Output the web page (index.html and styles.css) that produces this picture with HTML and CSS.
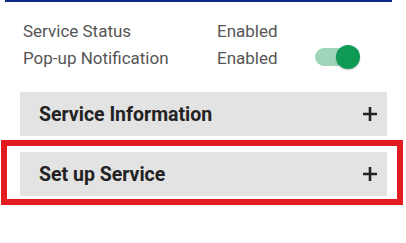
FILE: index.html
```html
<!DOCTYPE html>
<html>
<head>
<meta charset="utf-8">
<link rel="stylesheet" href="styles.css">
</head>
<body>
<div class="topline"></div>
<div class="status">
  <div class="row">
    <span class="label">Service Status</span>
    <span class="value">Enabled</span>
  </div>
  <div class="row">
    <span class="label">Pop-up Notification</span>
    <span class="value">Enabled</span>
    <span class="toggle"><span class="track"></span><span class="knob"></span></span>
  </div>
</div>
<div class="panel first">
  <span class="title">Service Information</span>
  <svg class="plus" width="16" height="16" viewBox="0 0 16 16"><path d="M8 1v14M1 8h14" stroke="#222" stroke-width="2.6" fill="none"/></svg>
</div>
<div class="highlight">
  <div class="panel">
    <span class="title">Set up Service</span>
    <svg class="plus" width="16" height="16" viewBox="0 0 16 16"><path d="M8 1v14M1 8h14" stroke="#222" stroke-width="2.6" fill="none"/></svg>
  </div>
</div>
</body>
</html>
```
FILE: styles.css
```css
html, body {
  margin: 0;
  padding: 0;
  background: #fff;
}
body {
  font-family: Roboto, "Liberation Sans", sans-serif;
  width: 406px;
}
.topline {
  margin-left: 5px;
  width: 387px;
  height: 2px;
  background: #0d2a85;
}
.status {
  padding-top: 15px;
  padding-left: 23px;
}
.row {
  display: grid;
  grid-template-columns: 194px 97px auto;
  align-items: center;
  height: 27px;
  font-size: 17px;
  color: #555;
}
.toggle {
  position: relative;
  width: 48px;
  height: 24px;
  display: block;
  margin-top: -2px;
}
.track {
  position: absolute;
  left: 1px;
  top: 3px;
  width: 40px;
  height: 18px;
  border-radius: 9px;
  background: #9fd6b9;
}
.knob {
  position: absolute;
  left: 22px;
  top: 0;
  width: 24px;
  height: 24px;
  border-radius: 50%;
  background: #0e9a55;
  box-shadow: 0 1px 2px rgba(0,0,0,0.25);
}
.panel {
  display: flex;
  align-items: center;
  justify-content: space-between;
  box-sizing: border-box;
  width: 367px;
  height: 44px;
  padding: 0 9px 0 19px;
  background: #e3e3e3;
}
.panel.first {
  margin-top: 21px;
  margin-left: 20px;
}
.title {
  font-size: 19.5px;
  font-weight: 700;
  color: #222;
}
.plus {
  display: block;
}
.highlight {
  margin: 4px 0 0 1px;
  width: 402px;
  box-sizing: border-box;
  border: 6px solid #e31c21;
  padding: 6px 10px 3px 13px;
}
```
